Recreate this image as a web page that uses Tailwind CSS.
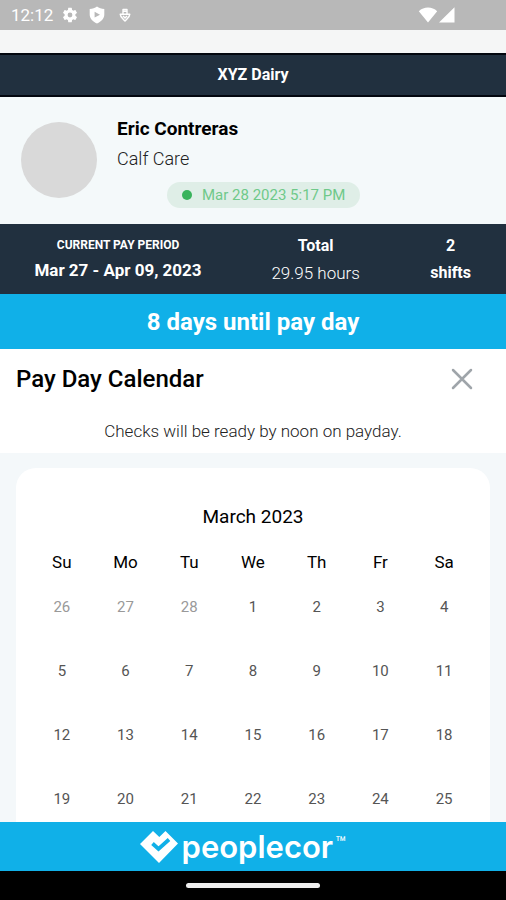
<!DOCTYPE html>
<html lang="en">
<head>
<meta charset="utf-8">
<meta name="viewport" content="width=device-width, initial-scale=1">
<title>Pay Day Calendar</title>
<script src="https://cdn.jsdelivr.net/npm/@tailwindcss/browser@4"></script>
</head>
<body class="flex h-screen flex-col overflow-hidden bg-[#f4f8fa] font-['Roboto',sans-serif] text-black">
  <div class="flex h-[30px] shrink-0 items-center bg-[#b8b8b8] pr-[51px] pl-[11px] text-white">
    <span class="text-[17px] leading-5">12:12</span>
    <svg class="ml-2 size-[18px]" viewBox="0 0 24 24" fill="currentColor" aria-hidden="true"><path d="M19.14 12.94c.04-.3.06-.61.06-.94s-.02-.64-.07-.94l2.03-1.58c.18-.14.23-.41.12-.61l-1.92-3.32c-.12-.22-.37-.29-.59-.22l-2.39.96c-.5-.38-1.03-.7-1.62-.94l-.36-2.54A.48.48 0 0 0 13.92 2.400h-3.840c-.24 0-.43.17-.47.41l-.36 2.540c-.59.24-1.13.57-1.62.94l-2.39-.96c-.22-.08-.47 0-.59.22L2.740 8.870c-.12.21-.08.47.12.61l2.030 1.580c-.05.3-.09.63-.09.94s.02.64.07.94l-2.030 1.580c-.18.14-.23.41-.12.61l1.920 3.320c.12.22.37.29.59.22l2.390-.96c.5.38 1.030.7 1.620.94l.36 2.540c.05.24.24.41.48.41h3.840c.24 0 .44-.17.47-.41l.36-2.540c.59-.24 1.130-.56 1.620-.94l2.390.96c.22.08.47 0 .59-.22l1.920-3.320c.12-.22.07-.47-.12-.61l-2.010-1.580zM12 15.200a3.200 3.200 0 1 1 0-6.400 3.200 3.200 0 0 1 0 6.400z"/></svg>
    <svg class="ml-2.5 h-[18px] w-4" viewBox="0 0 16 18" fill="currentColor" fill-rule="evenodd" aria-hidden="true"><path d="M8 .5c2 1.500 4.500 2.200 7.300 2.500v5.500c0 4-2.800 6.900-7.300 9-4.500-2.100-7.300-5-7.300-9V3C3.500 2.700 6 2 8 .5zM5.600 5.800v5.800L11 8.700z"/></svg>
    <svg class="ml-3.5 h-[14px] w-3" viewBox="0 0 12 14" fill="none" stroke="currentColor" stroke-width="1.400" stroke-linejoin="round" aria-hidden="true"><path d="M4 5.500V1.500h4v4M4 3.300h4M1.200 6.200h9.600c0 2.600-2.400 4-4.800 6.800C3.600 10.200 1.200 8.800 1.200 6.200z"/><path d="M4 8l2 2 2-2"/></svg>
    <svg class="ml-auto h-4 w-[37px]" viewBox="0 0 37 16" fill="currentColor" aria-hidden="true"><path d="M.800 4.200C5.800-.6 14.200-.6 19.200 4.200L10 15.500zM36.500.2v15.300H21z"/></svg>
  </div>
  <div class="h-[23px] shrink-0 bg-[#f5f6f6]"></div>
  <header class="flex h-11 shrink-0 items-center justify-center border-y-2 border-[#03070f] bg-[#21303f] text-white">
    <h1 class="text-base font-bold">XYZ Dairy</h1>
  </header>

  <section class="flex h-[127px] shrink-0 items-start bg-[#f4f9fa] px-[21px] pt-[19px]">
    <div class="mt-1.5 size-[76px] shrink-0 rounded-full bg-[#d9d9d9]"></div>
    <div class="ml-5">
      <h2 class="text-[19px] leading-[26px] font-bold">Eric Contreras</h2>
      <p class="mt-1 text-lg leading-[26px] font-light text-[#222222]">Calf Care</p>
      <p class="mt-2.5 ml-[50px] flex h-[26px] items-center rounded-full bg-[#dfeee7] px-[15px] text-[15px] text-[#6fc98a]"><span class="mr-2.5 size-2.5 rounded-full bg-[#39b35c]"></span>Mar 28 2023 5:17 PM</p>
    </div>
  </section>

  <section class="flex h-[70px] shrink-0 bg-[#21303f] px-3 pt-3 text-center text-base leading-5 text-white">
    <div class="w-[44%]">
      <h3 class="text-xs leading-[18px] font-bold">CURRENT PAY PERIOD</h3>
      <p class="mt-1.5 text-[17px] font-bold">Mar 27 - Apr 09, 2023</p>
    </div>
    <div class="w-[38%]">
      <h3 class="font-bold">Total</h3>
      <p class="mt-[7px] text-[17px] font-light">29.95 hours</p>
    </div>
    <div class="flex-1 font-bold">
      <p>2</p>
      <p class="mt-[7px]">shifts</p>
    </div>
  </section>
  <p class="flex h-[55px] shrink-0 items-center justify-center bg-[#10b0e8] text-2xl font-bold text-white">8 days until pay day</p>

  <section class="shrink-0 bg-white pb-2.5">
    <div class="flex items-center justify-between pt-4 pr-8 pl-4">
      <h2 class="text-2xl leading-7 font-medium">Pay Day Calendar</h2>
      <button type="button" aria-label="Close" class="flex size-6 items-center justify-center text-[#9fa5aa]">
        <svg class="size-6" viewBox="0 0 24 24" fill="none" stroke="currentColor" stroke-width="2.500" stroke-linecap="round" aria-hidden="true"><path d="M3 3l18 18M21 3L3 21"/></svg>
      </button>
    </div>
    <p class="mt-[26px] text-center text-[17px] leading-6 font-light text-[#222222]">Checks will be ready by noon on payday.</p>
  </section>

  <main class="min-h-0 flex-1 overflow-hidden px-4 pt-[15px]">
    <div class="rounded-[20px] bg-white px-3.5 pt-[37px] pb-4">
      <h3 class="text-center text-[19px] leading-6 font-normal">March 2023</h3>
      <table class="mt-[21px] w-full table-fixed text-center text-[15px] text-[#555555]">
        <thead class="text-[17px] text-black">
          <tr class="h-6"><th class="p-0 font-normal">Su</th><th class="p-0 font-normal">Mo</th><th class="p-0 font-normal">Tu</th><th class="p-0 font-normal">We</th><th class="p-0 font-normal">Th</th><th class="p-0 font-normal">Fr</th><th class="p-0 font-normal">Sa</th></tr>
        </thead>
        <tbody>
          <tr class="h-16"><td class="text-[#999999]">26</td><td class="text-[#999999]">27</td><td class="text-[#999999]">28</td><td>1</td><td>2</td><td>3</td><td>4</td></tr>
          <tr class="h-16"><td>5</td><td>6</td><td>7</td><td>8</td><td>9</td><td>10</td><td>11</td></tr>
          <tr class="h-16"><td>12</td><td>13</td><td>14</td><td>15</td><td>16</td><td>17</td><td>18</td></tr>
          <tr class="h-16"><td>19</td><td>20</td><td>21</td><td>22</td><td>23</td><td>24</td><td>25</td></tr>
        </tbody>
      </table>
    </div>
  </main>

  <footer class="shrink-0">
    <div class="flex h-[49px] items-center justify-center bg-[#10b0e8] pr-5 text-white">
      <svg class="h-8 w-[38px]" viewBox="0 0 38 32" aria-hidden="true"><path fill="currentColor" d="M0 13 13 0l6.300 6L25.500 0 38 12.500 19 32z"/><path fill="none" stroke="#10b0e8" stroke-width="3.800" d="M12.500 12.500l6 5.500L29 8.500"/></svg>
      <p class="ml-1 flex items-start"><span class="font-['Inter',sans-serif] text-[31px] leading-8 font-semibold">peoplecor</span><span class="ml-0.5 text-lg leading-6">™</span></p>
    </div>
    <div class="flex h-[29px] items-center justify-center bg-black"><div class="h-[5px] w-[134px] rounded-full bg-[#eeeeee]"></div></div>
  </footer>
</body>
</html>
